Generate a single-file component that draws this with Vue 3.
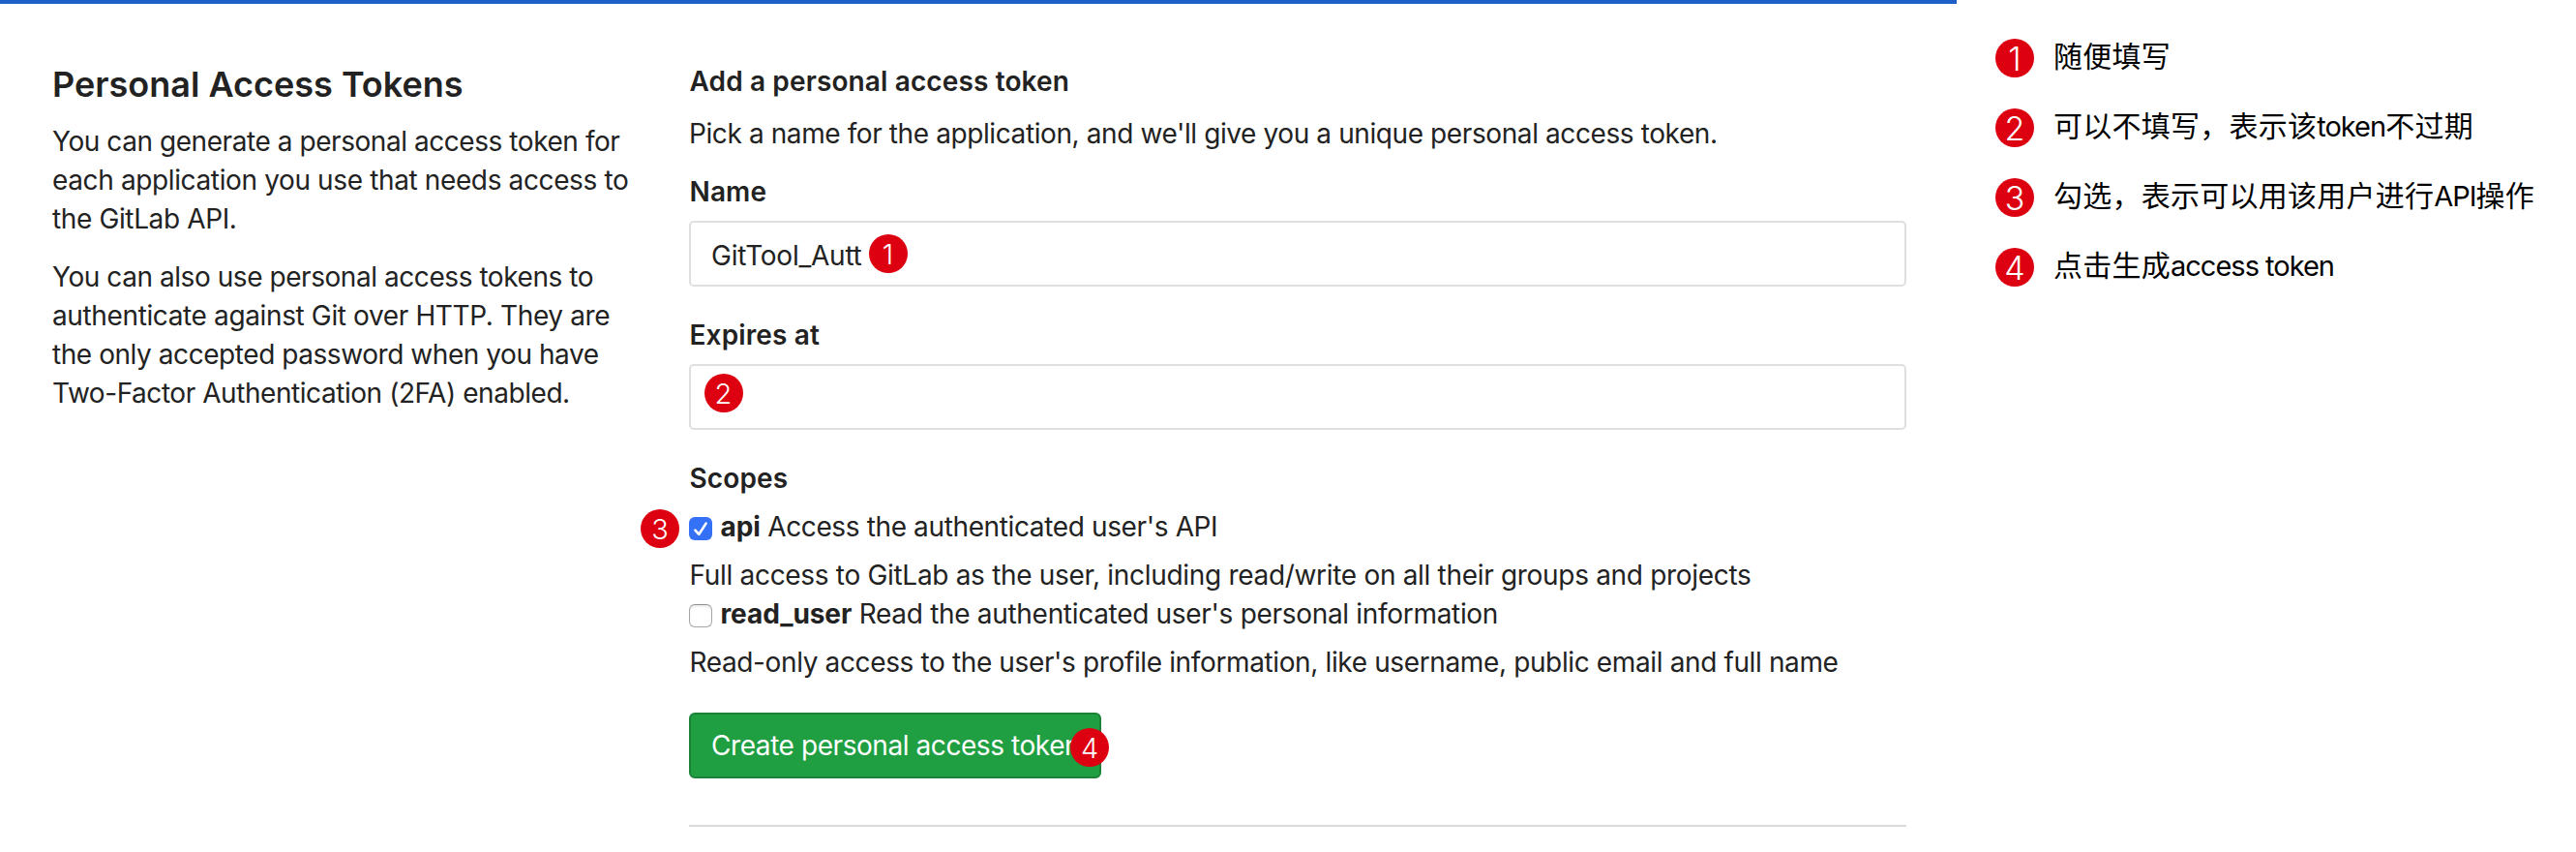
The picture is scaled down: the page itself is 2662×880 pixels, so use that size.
<script setup>
import { ref } from 'vue'

const tokenName = ref('GitTool_Autt')
const apiScope = ref(true)
const readUserScope = ref(false)

const notes = [
  [{ text: '随便填写' }],
  [{ text: '可以不填写，表示该' }, { text: 'token', latin: true }, { text: '不过期' }],
  [{ text: '勾选，表示可以用该用户进行' }, { text: 'API', latin: true }, { text: '操作' }],
  [{ text: '点击生成' }, { text: 'access token', latin: true }],
]
</script>

<template>
  <div class="page">
    <main class="settings">
      <section class="about">
        <h4 class="title">Personal Access Tokens</h4>
        <p class="text">
          <span class="line tight">You can generate a personal access token for</span>
          <span class="line">each application you use that needs access to</span>
          <span class="line">the GitLab API.</span>
        </p>
        <p class="text">
          <span class="line tight">You can also use personal access tokens to</span>
          <span class="line">authenticate against Git over HTTP. They are</span>
          <span class="line tight">the only accepted password when you have</span>
          <span class="line tight">Two-Factor Authentication (2FA) enabled.</span>
        </p>
      </section>

      <form class="form" @submit.prevent>
        <h5 class="strong">Add a personal access token</h5>
        <p class="intro">Pick a name for the application, and we'll give you a unique personal access token.</p>

        <div class="field">
          <label class="strong" for="name">Name</label>
          <input id="name" v-model="tokenName" class="input" type="text" />
          <span class="badge badge-name">1</span>
        </div>

        <div class="field">
          <label class="strong" for="expires">Expires at</label>
          <input id="expires" class="input" type="text" />
          <span class="badge badge-expires">2</span>
        </div>

        <div class="scopes">
          <div class="strong scopes-title">Scopes</div>
          <label class="scope">
            <input v-model="apiScope" class="native" type="checkbox" />
            <span class="box" :class="{ checked: apiScope }">
              <svg v-if="apiScope" viewBox="0 0 24 24" width="24" height="24">
                <path d="M6.4 13.6 L10.3 17.8 L17.6 6.6" />
              </svg>
            </span>
            <span><b>api</b> Access the authenticated user's API</span>
            <span class="badge badge-scope">3</span>
          </label>
          <p class="hint loose">Full access to GitLab as the user, including read/write on all their groups and projects</p>
          <label class="scope">
            <input v-model="readUserScope" class="native" type="checkbox" />
            <span class="box" :class="{ checked: readUserScope }"></span>
            <span class="loose"><b>read_user</b> Read the authenticated user's personal information</span>
          </label>
          <p class="hint">Read-only access to the user's profile information, like username, public email and full name</p>
        </div>

        <div class="actions">
          <button class="create" type="submit">Create personal access token</button>
          <span class="badge badge-create">4</span>
        </div>
        <hr class="rule" />
      </form>
    </main>

    <ol class="notes">
      <li v-for="(parts, i) in notes" :key="i" class="note">
        <span class="mark">{{ i + 1 }}</span>
        <span class="note-text"><span v-for="(part, j) in parts" :key="j" :class="{ latin: part.latin }">{{ part.text }}</span></span>
      </li>
    </ol>
  </div>
</template>

<style>
html,
body {
  background: #fff;
}
</style>

<style scoped>
.page {
  display: flex;
  width: 2662px;
  height: 880px;
  overflow: hidden;
  font: 400 28px/40px Inter, "Noto Sans CJK SC", sans-serif;
  letter-spacing: -0.37px;
  color: #222;
  background: #fff;
}
h4, h5, p, ol {
  margin: 0;
  padding: 0;
}
.settings {
  box-sizing: border-box;
  display: flex;
  width: 2022px;
  padding: 60px 52px 0 54px;
  border-top: 4px solid #1f60c8;
}
.about {
  width: 658px;
  padding-top: 1px;
}
.title {
  font-size: 36px;
  font-weight: 600;
  line-height: 44px;
  letter-spacing: 0;
}
.text {
  margin-top: 17px;
}
.text + .text {
  margin-top: 20px;
}
.line {
  display: block;
  white-space: nowrap;
}
.tight {
  letter-spacing: -0.44px;
}
.loose {
  letter-spacing: -0.31px;
}
.form {
  width: 1258px;
  white-space: nowrap;
}
.strong {
  display: block;
  padding-left: 0.5px;
  font-size: 28px;
  font-weight: 600;
  letter-spacing: 0.13px;
}
.intro {
  margin: 14px 0 20px;
  letter-spacing: -0.4px;
}
.field {
  position: relative;
  margin-bottom: 30px;
}
.input {
  box-sizing: border-box;
  display: block;
  width: 100%;
  height: 68px;
  margin-top: 10px;
  padding: 3px 21px 0;
  border: 2px solid #dfdfdf;
  border-radius: 5px;
  outline: none;
  background: #fff;
  color: #222;
  font: inherit;
  letter-spacing: -0.24px;
}
.scopes-title {
  margin-bottom: 10px;
}
.scope {
  position: relative;
  display: flex;
  align-items: center;
}
.scope b {
  font-weight: 700;
  letter-spacing: -0.1px;
}
.native {
  position: absolute;
  opacity: 0;
}
.box {
  box-sizing: border-box;
  width: 24px;
  height: 24px;
  margin: 4px 8.5px 0 0;
  border: 1.5px solid #a6a6a6;
  border-top-color: #8e8e8e;
  border-radius: 6px;
  background: #fff;
  box-shadow: inset 0 2px 2px rgba(0, 0, 0, 0.07);
}
.box.checked {
  border: 0;
  background: #3471f7;
  box-shadow: none;
}
.box svg {
  display: block;
}
.box path {
  fill: none;
  stroke: #fff;
  stroke-width: 2.6;
  stroke-linecap: round;
  stroke-linejoin: round;
}
.hint {
  margin-top: 10px;
  padding-left: 0.5px;
}
.actions {
  position: relative;
  margin-top: 32px;
}
.create {
  box-sizing: border-box;
  display: block;
  width: 426px;
  height: 68px;
  padding: 0 21px;
  border: 2px solid #1b8237;
  border-radius: 6px;
  background: #1f9f42;
  color: #fff;
  font: inherit;
  letter-spacing: -0.43px;
  text-align: left;
}
.rule {
  height: 2px;
  margin: 48px 0 0;
  border: 0;
  background: #dadada;
}
.badge,
.mark {
  box-sizing: border-box;
  width: 40px;
  height: 40px;
  border-radius: 50%;
  background: #dc0010;
  color: #fff;
  text-align: center;
  letter-spacing: 0;
}
.badge {
  position: absolute;
  font-size: 29px;
  font-weight: 300;
  line-height: 42px;
}
.badge-name {
  top: 63.5px;
  left: 185.5px;
}
.badge-expires {
  top: 60px;
  left: 15.5px;
}
.badge-scope {
  top: 2px;
  left: -50px;
}
.badge-create {
  top: 16px;
  left: 394px;
}
.notes {
  display: flex;
  flex-direction: column;
  gap: 32px;
  padding: 40px 0 0 40px;
  list-style: none;
}
.note {
  display: flex;
  gap: 20px;
  height: 40px;
  white-space: nowrap;
}
.mark {
  font-size: 34px;
  font-weight: 350;
  line-height: 42px;
}
.note-text {
  margin-top: -2px;
  color: #000;
  font-size: 30px;
  font-weight: 400;
  letter-spacing: 0.25px;
}
.latin {
  font-size: 29px;
  letter-spacing: -1px;
}
</style>
